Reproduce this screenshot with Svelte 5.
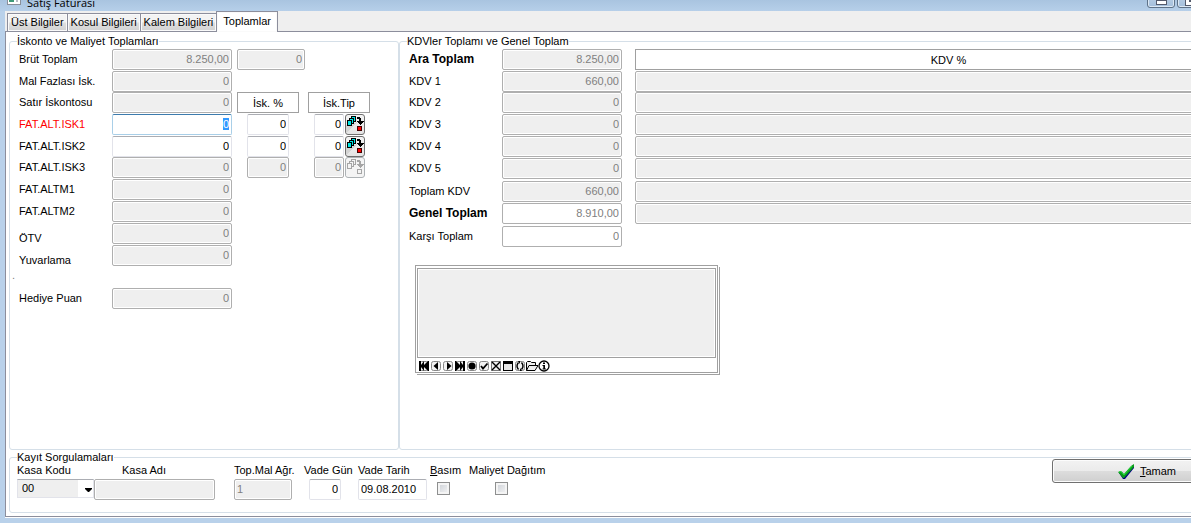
<script lang="ts">
  import { onMount } from 'svelte';

  interface Total {
    id: string;
    label: string;
    value: string;
    editable?: boolean;
    low?: boolean;
    rate?: string;
    type?: string;
  }

  const tabs = ['Üst Bilgiler', 'Kosul Bilgileri', 'Kalem Bilgileri', 'Toplamlar'];
  let activeTab = $state('Toplamlar');

  const discounts: Total[] = [
    { id: 'brut', label: 'Brüt Toplam', value: '8.250,00' },
    { id: 'fazla', label: 'Mal Fazlası İsk.', value: '0' },
    { id: 'satir', label: 'Satır İskontosu', value: '0' },
    { id: 'isk1', label: 'FAT.ALT.ISK1', value: '0', editable: true, rate: '0', type: '0' },
    { id: 'isk2', label: 'FAT.ALT.ISK2', value: '0', editable: true, rate: '0', type: '0' },
    { id: 'isk3', label: 'FAT.ALT.ISK3', value: '0', rate: '0', type: '0' },
    { id: 'altm1', label: 'FAT.ALTM1', value: '0' },
    { id: 'altm2', label: 'FAT.ALTM2', value: '0' },
    { id: 'otv', label: 'ÖTV', value: '0', low: true },
    { id: 'yuvarlama', label: 'Yuvarlama', value: '0', low: true },
  ];

  const taxes = [
    { id: 'ara', label: 'Ara Toplam', value: '8.250,00', bold: true },
    { id: 'kdv1', label: 'KDV 1', value: '660,00' },
    { id: 'kdv2', label: 'KDV 2', value: '0' },
    { id: 'kdv3', label: 'KDV 3', value: '0' },
    { id: 'kdv4', label: 'KDV 4', value: '0' },
    { id: 'kdv5', label: 'KDV 5', value: '0' },
    { id: 'toplamkdv', label: 'Toplam KDV', value: '660,00' },
    { id: 'genel', label: 'Genel Toplam', value: '8.910,00', bold: true, white: true },
    { id: 'karsi', label: 'Karşı Toplam', value: '0', white: true },
  ];

  const navButtons = [
    'first', 'prev', 'next', 'last', 'insert', 'post',
    'cancel', 'window', 'refresh', 'open', 'info',
  ];

  onMount(() => {
    const el = document.getElementById('isk1') as HTMLInputElement;
    el.focus();
    el.select();
  });
</script>

{#snippet pickIcon(off: boolean)}
  <svg width="18" height="17" viewBox="-1 0 18 17" shape-rendering="crispEdges" aria-hidden="true">
    <path d="M-1 17V9H5L11 5L0 17z" fill={off ? '#f4f4f4' : '#d4d4d4'} />
    <g fill={off ? '#f4f4f4' : '#00e5e5'} stroke={off ? '#a5a5a5' : '#000'}>
      <rect x="4.5" y="0.5" width="4" height="5" />
      <rect x="2.5" y="2.5" width="4" height="5" />
      <rect x="0.5" y="4.5" width="4" height="5" />
    </g>
    <path d="M10 1h3v1h1v3h3v1h-1v1h-1v1h-1v1h-1v-1h-1v-1h-1v-1h-1v-1h2v-2h-2z" fill={off ? '#a5a5a5' : '#000'} />
    <rect
      x="10.5" y="10.5" width="4" height="4"
      fill={off ? '#f4f4f4' : '#f00'} stroke={off ? '#a5a5a5' : '#400'}
    />
  </svg>
{/snippet}

{#snippet navIcon(name: string)}
  <svg width="12" height="12" viewBox="0 0 12 12" aria-hidden="true">
    {#if name !== 'info' && name !== 'open' && name !== 'window' && name !== 'cancel'}
      <rect x="1.5" y="1.5" width="9" height="9" rx="2" fill="#f2f2f2" stroke="#888" />
    {/if}
    {#if name === 'first'}
      <path d="M1 1h2v4l3-4v4l4-4h1v10h-1L6 7v4L3 7v4H1z" />
    {:else if name === 'prev'}
      <path d="M8 2v8L3.5 6z" />
    {:else if name === 'next'}
      <path d="M5 2v8l4.5-4z" />
    {:else if name === 'last'}
      <path d="M11 1H9v4L6 1v4L2 1H1v10h1l4-4v4l3-4v4h2z" />
    {:else if name === 'insert'}
      <circle cx="6" cy="6" r="3.6" />
    {:else if name === 'post'}
      <path d="M3 6l2 2.5L9.5 3.5" fill="none" stroke="#000" stroke-width="1.8" />
    {:else if name === 'cancel'}
      <rect x="1.5" y="1.5" width="9" height="9" fill="#eee" stroke="#777" />
      <path d="M2 2l8 8M10 2l-8 8" stroke="#000" stroke-width="1.4" />
    {:else if name === 'window'}
      <rect x="1.5" y="1.5" width="9" height="9" fill="#e6e6e6" stroke="#000" />
      <path d="M1 1h10v3H1z" />
    {:else if name === 'refresh'}
      <path d="M4.5 2.5Q1.5 6 4.5 9.5M7.5 2.5Q10.5 6 7.5 9.5" fill="none" stroke="#000" stroke-width="1.4" />
      <path d="M4 1h2v3zM6 8v3h2z" />
    {:else if name === 'open'}
      <path d="M.5 10.5v-8l1-1h3l1 1h4v3M.5 10.5l2.5-5h9l-3 5z" fill="#eee" stroke="#000" />
    {:else}
      <circle cx="6" cy="6" r="5" fill="#fff" stroke="#000" stroke-width="1.3" />
      <path d="M5 2.5h2v1.5H5zM4.5 5H7v3.5h1v1H4.5v-1h.8V6H4.5z" />
    {/if}
  </svg>
{/snippet}

<div class="screen">
  <div class="window">
    <header class="titlebar">
      <svg class="app-icon" width="14" height="13" viewBox="0 0 14 13" aria-hidden="true">
        <rect x="0.5" y="0.5" width="13" height="12" fill="#fff" stroke="#8a8f99" />
        <path d="M2 2h5v8H2z" fill="#3f9a78" />
        <path d="M9 7h2v3H9z" fill="#b8bcc4" />
      </svg>
      <span class="title">Satış Faturası</span>
      <div class="window-buttons">
        <button aria-label="Simge durumuna küçült"><span class="glyph-min"></span></button>
        <button aria-label="Ekranı kapla"><span class="glyph-max"></span></button>
        <button class="close" aria-label="Kapat"></button>
      </div>
    </header>

    <div class="tabs" role="tablist">
      {#each tabs as tab}
        <button
          role="tab"
          class:active={tab === activeTab}
          aria-selected={tab === activeTab}
          onclick={() => (activeTab = tab)}>{tab}</button
        >
      {/each}
    </div>

    <main class="panel">
      <div class="groups">
        <fieldset>
          <legend>İskonto ve Maliyet Toplamları</legend>
          <div class="rows discounts">
            {#each discounts as row}
              <div class="row">
                <label for={row.id} class:low={row.low} class:alert={row.id === 'isk1'}>{row.label}</label>
                <input id={row.id} class="amount" value={row.value} disabled={!row.editable} />
                {#if row.id === 'brut'}
                  <input class="count" value="0" disabled aria-label="Brüt adet" />
                {:else if row.id === 'satir'}
                  <span class="head">İsk. %</span>
                  <span class="head second">İsk.Tip</span>
                {:else if row.rate}
                  <input class="rate" value={row.rate} disabled={!row.editable} aria-label="{row.label} %" />
                  <input class="type" value={row.type} disabled={!row.editable} aria-label="{row.label} tip" />
                  <button class="pick" disabled={!row.editable} aria-label="{row.label} tip seç">
                    {@render pickIcon(!row.editable)}
                  </button>
                {/if}
              </div>
            {/each}
            <div class="dot">.</div>
            <div class="row">
              <label for="puan">Hediye Puan</label>
              <input id="puan" class="amount" value="0" disabled />
            </div>
          </div>
        </fieldset>

        <fieldset>
          <legend>KDVler Toplamı ve Genel Toplam</legend>
          <div class="rows taxes">
            {#each taxes as row, i}
              <div class="row">
                <label for={row.id} class:bold={row.bold}>{row.label}</label>
                <input id={row.id} class="amount" class:white={row.white} value={row.value} disabled />
                {#if i === 0}
                  <span class="kdv-head">KDV %</span>
                {:else if i < 8}
                  <input class="wide" disabled aria-label="{row.label} %" />
                {/if}
              </div>
            {/each}
          </div>
          <div class="browser">
            <div class="sheet"></div>
            <div class="nav">
              {#each navButtons as name}
                <button aria-label={name}>{@render navIcon(name)}</button>
              {/each}
            </div>
          </div>
        </fieldset>
      </div>

      <fieldset class="query">
        <legend>Kayıt Sorgulamaları</legend>
        <div class="query-row">
          <div class="field kod">
            <label for="kod">Kasa Kodu</label>
            <div class="combo">
              <select id="kod"><option>00</option></select>
              <svg width="7" height="4" viewBox="0 0 7 4" aria-hidden="true"><path d="M0 0h7v1L4 4H3L0 1z" /></svg>
            </div>
          </div>
          <div class="field adi">
            <label for="adi">Kasa Adı</label>
            <input id="adi" disabled />
          </div>
          <div class="field agr">
            <label for="agr">Top.Mal Ağr.</label>
            <input id="agr" value="1" disabled />
          </div>
          <div class="field gun">
            <label for="gun">Vade Gün</label>
            <input id="gun" value="0" />
          </div>
          <div class="field tarih">
            <label for="tarih">Vade Tarih</label>
            <input id="tarih" value="09.08.2010" />
          </div>
          <div class="field check basim">
            <label for="basim"><u>B</u>asım</label>
            <input id="basim" type="checkbox" />
          </div>
          <div class="field check dagitim">
            <label for="dagitim">Maliyet Dağıtım</label>
            <input id="dagitim" type="checkbox" />
          </div>
          <button class="ok">
            <svg width="17" height="15" viewBox="0 0 17 15" aria-hidden="true">
              <path d="M1 9l3-1 2 3 8-9 2-1v3L7 15H5z" fill="#000080" />
              <path d="M0 8l3-1 3 3 7-8 3-2v3L6 14H5z" fill="#0a9a1a" />
              <path d="M1 8l2-.5 3 3.5 8-9" fill="none" stroke="#1fe03a" />
            </svg>
            <span><u>T</u>amam</span>
          </button>
        </div>
      </fieldset>
    </main>
  </div>
</div>

<style>
  :global(body) {
    margin: 0;
  }

  .screen {
    height: 100vh;
    overflow: hidden;
    background: #b9d1ea;
    color: #000;
    font: 11px/13px 'Liberation Sans', Arial, sans-serif;
  }

  /* the window runs past the right edge of the screen */
  .window {
    display: flex;
    flex-direction: column;
    box-sizing: border-box;
    height: 100%;
    margin-right: -76px;
    padding: 0 0 6px 5px;
  }

  input,
  select,
  button {
    box-sizing: border-box;
    margin: 0;
    font: inherit;
    color: #000;
  }

  .titlebar {
    display: flex;
    align-items: flex-end;
    height: 11px;
    margin-left: -5px;
    padding-left: 7px;
    overflow: hidden;
    background: linear-gradient(#a9c4e0, #b6cfe9);
  }

  .app-icon {
    flex: none;
    margin-bottom: 6px;
  }

  .title {
    margin: 0 0 1px 6px;
    font: 11px/15px 'Open Sans', 'Noto Sans', sans-serif;
  }

  .window-buttons {
    display: flex;
    gap: 2px;
    margin: 0 13px 3px auto;
  }

  .window-buttons button {
    display: flex;
    align-items: flex-end;
    justify-content: center;
    width: 28px;
    height: 18px;
    padding: 0 0 2px;
    border: 1px solid #5e7288;
    border-radius: 0 0 3px 3px;
    background: linear-gradient(#c3d5e8, #a4bfdc);
    box-shadow: inset 0 0 0 1px #dce8f4;
  }

  .window-buttons .close {
    width: 47px;
    background: #c9604a;
  }

  .glyph-min {
    width: 11px;
    height: 5px;
    box-sizing: border-box;
    border: 1px solid #545a6c;
    background: #fff;
  }

  .glyph-max {
    width: 11px;
    height: 9px;
    box-sizing: border-box;
    border: 3px solid #fff;
    outline: 1px solid #545a6c;
    background: #545a6c;
  }

  .tabs {
    display: flex;
    align-items: flex-end;
    height: 20px;
    padding-left: 1px;
    border-left: 1px solid #efefef;
    background: #efefef;
  }

  .tabs button {
    height: 18px;
    padding: 0 3px;
    border: 1px solid #8c8e9c;
    border-right-width: 0;
    border-bottom: 0;
    background: linear-gradient(#f3f3f3 45%, #dedede 55%, #d2d2d2);
    box-shadow: inset 0 0 0 1px #fafafa;
    white-space: nowrap;
  }

  .tabs .active {
    position: relative;
    height: 21px;
    margin-bottom: -1px;
    padding: 0 6px 2px;
    border-right-width: 1px;
    background: #fff;
  }

  .panel {
    display: flex;
    flex: 1;
    flex-direction: column;
    padding: 3px;
    border: 1px solid #8c8e9c;
    box-shadow: 0 1px #fff;
    background: #fff;
  }

  .groups {
    display: grid;
    grid-template-columns: 390px 1fr;
    flex: 1;
  }

  fieldset {
    min-width: 0;
    margin: 0;
    padding: 1px 0 0 9px;
    border: 1px solid #d5dfe8;
    border-radius: 3px;
  }

  legend {
    margin-left: -2px;
    padding: 0;
  }

  .rows {
    display: grid;
  }

  .discounts {
    grid-template-rows: 22px 21px 22px 22px 21px 22px 22px 22px 22px 22px 21px 22px;
  }

  .taxes {
    grid-template-rows: 22px 21px 22px 22px 22px 23px 22px 23px 22px;
  }

  .row {
    display: flex;
    align-items: flex-start;
  }

  .row label {
    flex: none;
    width: 93px;
    line-height: 21px;
  }

  .row .low {
    align-self: flex-end;
    line-height: 13px;
  }

  .row .alert {
    color: #f00;
  }

  .row .bold {
    font-size: 12px;
    font-weight: bold;
  }

  input {
    height: 21px;
    padding: 0 2px 1px;
    border: 1px solid #e2e3ea;
    border-top-color: #abadb3;
    border-radius: 2px;
    outline: 0;
    background: #fff;
  }

  input:focus {
    border-color: #a9cfe8;
    border-top-color: #3d7bad;
  }

  input::selection {
    color: #fff;
    background: #3399ff;
  }

  input:disabled {
    border-color: #afafaf;
    background: #efefef;
    box-shadow: inset 0 0 0 1px #fff;
    color: #808080;
  }

  input.white:disabled {
    background: #fff;
  }

  .row input {
    text-align: right;
  }

  .amount {
    flex: none;
    width: 120px;
  }

  .count {
    width: 68px;
    margin-left: 5px;
  }

  .rate {
    width: 42px;
    margin-left: 15px;
  }

  .type {
    width: 30px;
    margin-left: 25px;
  }

  .pick {
    display: flex;
    align-items: center;
    justify-content: center;
    width: 20px;
    height: 21px;
    margin-left: 1px;
    padding: 0;
    border: 1px solid #707070;
    border-radius: 3px;
    background: linear-gradient(#f4f4f4, #e4e4e4);
  }

  .pick:disabled {
    border-color: #adb2b5;
    background: #f4f4f4;
  }

  .head,
  .kdv-head {
    box-sizing: border-box;
    height: 21px;
    border: 1px solid #a0a0a0;
    line-height: 20px;
    text-align: center;
  }

  .head {
    width: 62px;
    margin-left: 5px;
  }

  .head.second {
    margin-left: 9px;
  }

  .dot {
    margin-left: -7px;
    color: #808080;
    line-height: 17px;
  }

  .wide,
  .kdv-head {
    flex: 1;
    min-width: 0;
    margin: 0 0 0 13px;
  }

  .browser {
    width: 299px;
    margin: 17px 0 0 6px;
    padding: 2px 1px 0;
    border: 1px solid #a0a0a0;
    box-shadow: 1px 1px #fff, 2px 2px #a0a0a0;
  }

  .sheet {
    height: 88px;
    border: 1px solid #a0a0a0;
    box-shadow: inset 0 0 0 1px #fff;
    background: #efefef;
  }

  .nav {
    display: flex;
    padding: 2px 1px 0;
  }

  .nav button {
    display: flex;
    padding: 0;
    border: 0;
    background: none;
  }

  .query {
    margin-top: 1px;
    padding: 0 20px 12px 7px;
  }

  .query legend {
    margin-left: 0;
  }

  .query-row {
    display: flex;
    align-items: flex-start;
  }

  .field {
    display: flex;
    flex: none;
    flex-direction: column;
    gap: 2px;
    white-space: nowrap;
  }

  .field label {
    line-height: 13px;
  }

  .kod {
    width: 77px;
  }

  .combo {
    position: relative;
  }

  .combo select {
    width: 100%;
    height: 19px;
    padding: 0 4px;
    appearance: none;
    border: 1px solid #e2e3ea;
    border-top-color: #abadb3;
    border-radius: 0;
    background: linear-gradient(to right, #efefef 60px, #fff 60px);
  }

  .combo svg {
    position: absolute;
    top: 9px;
    right: 2px;
    pointer-events: none;
  }

  .adi {
    width: 121px;
  }

  .adi label {
    margin-left: 28px;
  }

  .agr {
    width: 58px;
    margin-left: 19px;
  }

  .gun {
    width: 42px;
    margin-left: 12px;
  }

  .gun input {
    width: 32px;
    margin-left: 5px;
    text-align: right;
  }

  .tarih {
    width: 69px;
    margin-left: 12px;
  }

  .check {
    align-items: flex-start;
  }

  .basim {
    width: 29px;
    margin-left: 3px;
  }

  .dagitim {
    margin-left: 10px;
  }

  .check input {
    width: 13px;
    height: 13px;
    margin: 3px 0 0 7px;
    appearance: none;
    border: 1px solid #8e8f8f;
    border-radius: 0;
    background: linear-gradient(135deg, #cbcfd5, #f6f6f6);
    box-shadow: inset 0 0 0 2px #f4f4f4;
  }

  .dagitim input {
    margin-left: 26px;
  }

  .check input:checked {
    background: #2a4a8a;
  }

  .ok {
    display: flex;
    align-items: center;
    justify-content: center;
    gap: 5px;
    width: 190px;
    height: 24px;
    margin: -5px 0 0 auto;
    border: 1px solid #707070;
    border-radius: 3px;
    background: linear-gradient(#f2f2f2, #ebebeb 50%, #dddddd 50%, #cfcfcf);
    box-shadow: inset 0 0 0 1px #fcfcfc;
  }
</style>
